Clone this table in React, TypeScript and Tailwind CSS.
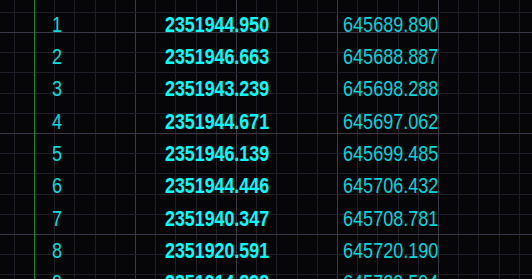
import React from "react";

type Row = { no: string; northing: string; easting: string };

const rows: Row[] = [
  { no: "1", northing: "2351944.950", easting: "645689.890" },
  { no: "2", northing: "2351946.663", easting: "645688.887" },
  { no: "3", northing: "2351943.239", easting: "645698.288" },
  { no: "4", northing: "2351944.671", easting: "645697.062" },
  { no: "5", northing: "2351946.139", easting: "645699.485" },
  { no: "6", northing: "2351944.446", easting: "645706.432" },
  { no: "7", northing: "2351940.347", easting: "645708.781" },
  { no: "8", northing: "2351920.591", easting: "645720.190" },
  { no: "9", northing: "2351914.898", easting: "645729.594" },
];

const W = 532;
const H = 279;
const STEP = 20.2;

// cad grid: minor every 20.2px, major every 5th line, origin at the green axis
const CadGrid: React.FC = () => {
  const xs: { p: number; major: boolean }[] = [];
  for (let k = -2; 34 + k * STEP < W; k++) {
    const p = Math.round(34 + k * STEP);
    if (p >= 0) xs.push({ p, major: k % 5 === 0 });
  }
  const ys: { p: number; major: boolean }[] = [];
  for (let k = -2; 32 + k * STEP < H; k++) {
    const p = Math.round(32 + k * STEP);
    if (p >= 0) ys.push({ p, major: k % 5 === 0 });
  }

  return (
    <svg
      className="absolute inset-0"
      width={W}
      height={H}
      shapeRendering="crispEdges"
    >
      {xs.map((x) => (
        <rect
          key={"x" + x.p}
          x={x.p}
          y={0}
          width={1}
          height={H}
          fill={x.major ? "#383846" : "#1f1f27"}
        />
      ))}
      {ys.map((y) => (
        <rect
          key={"y" + y.p}
          x={0}
          y={y.p}
          width={W}
          height={1}
          fill={y.major ? "#383846" : "#1f1f27"}
        />
      ))}
      {/* y axis */}
      <rect x={34} y={0} width={1} height={H} fill="#1f8a1f" />
    </svg>
  );
};

export default function App() {
  return (
    <div
      className="relative w-[532px] h-[279px] overflow-hidden bg-[#060608]"
      style={{ fontFamily: '"Liberation Sans", Arial, sans-serif' }}
    >
      <CadGrid />

      <div className="relative flex flex-col pt-[13.8px] pl-[52px]">
        {rows.map((r) => (
          <div key={r.no} className="flex h-[32.3px] shrink-0 whitespace-nowrap">
            <div className="w-[113px] shrink-0">
              <span className="inline-block origin-left scale-x-[0.84] text-[21.5px] leading-[22px] text-[#00dede]">
                {r.no}
              </span>
            </div>
            <div className="w-[178px] shrink-0">
              <span className="inline-block origin-left scale-x-[0.81] text-[22px] leading-[22px] font-bold text-[#00ffff]">
                {r.northing}
              </span>
            </div>
            <div className="shrink-0">
              <span className="inline-block origin-left scale-x-[0.84] text-[21.5px] leading-[22px] text-[#00d6dc]">
                {r.easting}
              </span>
            </div>
          </div>
        ))}
      </div>
    </div>
  );
}
